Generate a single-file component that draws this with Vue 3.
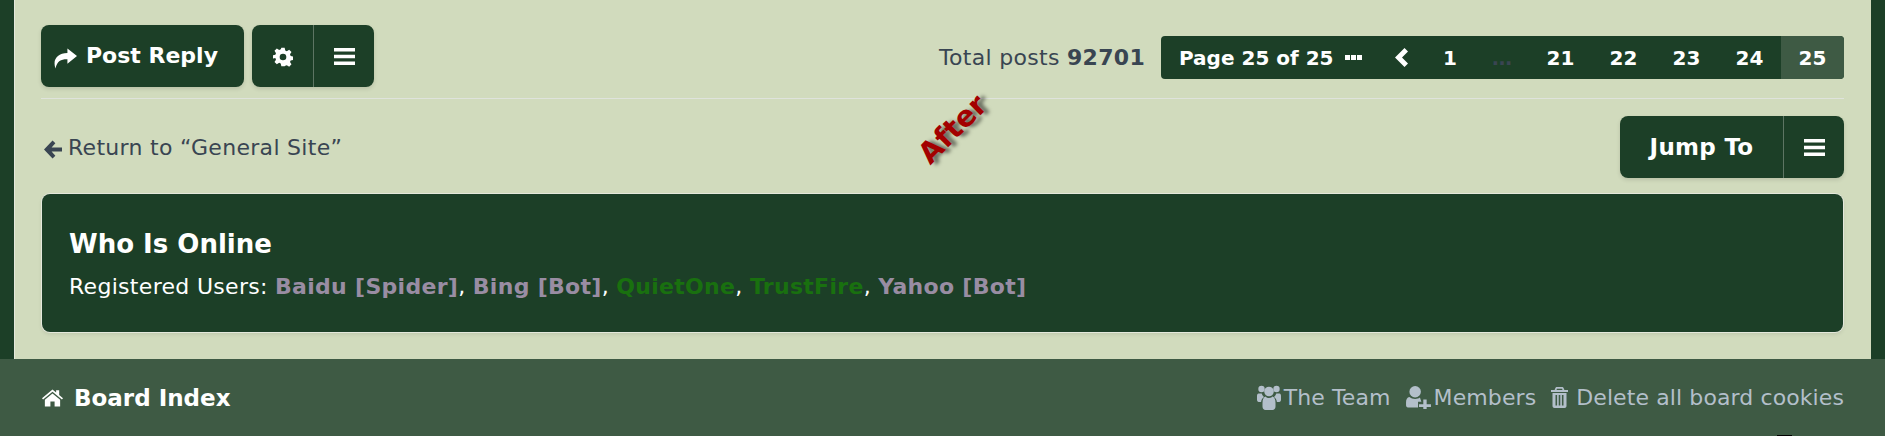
<template>
  <div class="page">
    <div class="wrap">
      <div class="content">
        <div class="action-bar">
          <a class="btn reply-btn">
            <svg class="ico reply" viewBox="0 0 24 21"><path d="M14 0l10 8-10 8v-4.800C8 11 3.200 12.500 1.600 21 -1.800 11.500 3.500 5 14 4.800z" /></svg>
            Post Reply
          </a>
          <div class="btn-group">
            <a class="btn seg">
              <svg class="ico gear" viewBox="0 0 24 24"><path fill-rule="evenodd" d="M10 1h4l.7 3.200 1.900.8 2.800-1.800 2.800 2.800-1.800 2.800.8 1.900 3.200.7v4l-3.200.7-.8 1.900 1.800 2.800-2.800 2.800-2.800-1.800-1.900.8L14 23h-4l-.7-3.200-1.900-.8-2.800 1.800-2.800-2.800 1.800-2.800-.8-1.900L-.4 14v-4l3.200-.7.8-1.900L1.800 4.600l2.800-2.800 2.800 1.800 1.900-.8zM12 8a4 4 0 1 0 0 8 4 4 0 0 0 0-8z" /></svg>
            </a>
            <a class="btn seg">
              <svg class="ico bars" viewBox="0 0 21 17"><path d="M0 0h21v3.400H0zM0 6.800h21v3.400H0zM0 13.600h21V17H0z" /></svg>
            </a>
          </div>
          <div class="pagination-wrap">
            <span class="total">Total posts <b>92701</b></span>
            <ul class="pagination">
              <li class="page-label">Page 25 of 25
                <svg class="ico dots" viewBox="0 0 17 5"><path d="M0 0h5v5H0zM6 0h5v5H6zM12 0h5v5h-5z" /></svg>
              </li>
              <li class="arrow"><svg class="ico chev" viewBox="0 0 13 19"><path d="M9.500 0L13 3.500 7 9.500l6 6L9.500 19 0 9.500z" /></svg></li>
              <li class="first">1</li>
              <li class="gap">…</li>
              <li v-for="p in pages" :key="p.label" :class="{ active: p.active }">{{ p.label }}</li>
            </ul>
          </div>
        </div>

        <div class="jump-row">
          <a class="back">
            <svg class="ico back-ico" viewBox="0 0 19 19"><path d="M9 0l3 3-4 4.500h11v4.200H8l4 4.300-3 3-9-9.500z" /></svg>
            Return to “General Site”
          </a>
          <div class="btn-group jump">
            <a class="btn seg jump-label">Jump To</a>
            <a class="btn seg">
              <svg class="ico bars" viewBox="0 0 21 17"><path d="M0 0h21v3.400H0zM0 6.800h21v3.400H0zM0 13.600h21V17H0z" /></svg>
            </a>
          </div>
        </div>

        <div class="after">After</div>

        <div class="online">
          <h3>Who Is Online</h3>
          <p>Registered Users:
            <template v-for="(u, i) in users" :key="u.name">
              <b :class="u.kind">{{ u.name }}</b><span v-if="i < users.length - 1">, </span>
            </template>
          </p>
        </div>
      </div>
    </div>

    <div class="footer">
      <a class="home">
        <svg class="ico home-ico" viewBox="0 0 22 18"><path d="M11 0l3.800 3.200V1H18v4.900L22 9.300l-1.100 1.300L11 2.400 1.100 10.600 0 9.300zM11 4.200l8 6.600V18h-5.800v-5.300H8.800V18H3v-7.200z" /></svg>
        Board Index
      </a>
      <div class="links">
        <a><svg class="ico team" viewBox="0 0 24 25"><circle cx="4.500" cy="4" r="3.200" /><circle cx="19.500" cy="4" r="3.200" /><circle cx="12" cy="6.500" r="4.800" /><path d="M1.500 8.500h3.200c.5 1.500 1.300 2.800 2.300 3.500-1.600 1-2.700 2.800-2.900 5H1.800C.6 17 0 16 0 14.800V11c0-1.500.6-2.500 1.500-2.500zM22.500 8.500h-3.200c-.5 1.500-1.300 2.800-2.300 3.500 1.600 1 2.700 2.800 2.900 5h2.300c1.200 0 1.800-1 1.800-2.200V11c0-1.500-.6-2.500-1.500-2.500zM8.500 11.500c1 1 2.200 1.500 3.500 1.500s2.500-.5 3.500-1.500c2 .8 3 3 3 6.500v3.500c0 2-1.300 3.500-3 3.500h-7c-1.700 0-3-1.500-3-3.500V18c0-3.500 1-5.700 3-6.500z" /></svg>The Team</a>
        <a><svg class="ico plus" viewBox="0 0 26 24"><circle cx="9.500" cy="6" r="6" /><path d="M3.500 11.500c1.500 1.300 3.800 2 6 2s3.500-.4 5-1.500l1.500 4.500h-3.500v6H2c-1.300 0-2-1-2-2.300v-3.200c0-3 1.200-5 3.500-5.500zM18 14h3.500v5H26v3h-4.500v2H18v-2h-4.500v-3H18z" /></svg>Members</a>
        <a><svg class="ico trash" viewBox="0 0 17 21"><path fill-rule="evenodd" d="M6 0h5c.8 0 1.400.5 1.700 1.200l.7 1.800H17v2H0V3h3.600l.7-1.800C4.600.5 5.200 0 6 0zm0 1.800L5.500 3h6L11 1.800zM1.500 6h14v13c0 1.200-.8 2-2 2h-10c-1.200 0-2-.8-2-2zM4.500 8v10.500h1.600V8zM7.700 8v10.500h1.600V8zM10.900 8v10.500h1.600V8z" /></svg>Delete all board cookies</a>
      </div>
    </div>
    <span class="sliver"></span>
  </div>
</template>

<script setup>
const pages = [
  { label: '21' },
  { label: '22' },
  { label: '23' },
  { label: '24' },
  { label: '25', active: true },
]

const users = [
  { name: 'Baidu [Spider]', kind: 'bot' },
  { name: 'Bing [Bot]', kind: 'bot' },
  { name: 'QuietOne', kind: 'member' },
  { name: 'TrustFire', kind: 'member' },
  { name: 'Yahoo [Bot]', kind: 'bot' },
]
</script>

<style>
html, body { margin: 0; background: #1c3f27; }
</style>

<style scoped>
.page { position: relative; width: 1885px; height: 436px; overflow: hidden; font-family: "DejaVu Sans", Verdana, sans-serif; font-size: 22px; letter-spacing: .3px; color: #394552; background: #1c3f27; }
.wrap { height: 359px; padding: 0 14px; box-sizing: border-box; }
.content { position: relative; height: 359px; box-sizing: border-box; padding: 25px 27px 0 26px; background: #d1dbbd; border-left: 1px solid #e4e8dc; }
.ico { fill: currentColor; display: block; flex: none; }

.action-bar { display: flex; align-items: flex-start; gap: 8px; height: 73px; border-bottom: 1px solid #dfe3dc; }
.btn { display: flex; align-items: center; justify-content: center; color: #fff; background: #1c3f27; font-weight: 700; height: 62px; box-sizing: border-box; }
.reply-btn { width: 203px; border-radius: 8px; gap: 9px; justify-content: flex-start; padding: 0 0 2px 13px; font-size: 22px; letter-spacing: 0; box-shadow: 0 2px 4px rgba(0, 0, 0, .12); }
.reply { width: 23px; height: 21px; margin-top: 6px; }
.btn-group { display: flex; border-radius: 8px; overflow: hidden; box-shadow: 0 2px 4px rgba(0, 0, 0, .12); }
.seg { width: 61px; }
.seg + .seg { border-left: 1px solid #5d7563; }
.gear { width: 20px; height: 20px; margin-top: 1px; }
.bars { width: 21px; height: 17px; }

.pagination-wrap { margin-left: auto; display: flex; align-items: center; gap: 16px; height: 43px; margin-top: 11px; }
.pagination { display: flex; margin: 0; padding: 0; list-style: none; height: 43px; background: #1c3f27; border-radius: 4px; overflow: hidden; color: #fff; font-weight: 700; font-size: 20px; letter-spacing: 0; }
.pagination li { display: flex; align-items: center; justify-content: center; width: 63px; }
.pagination .page-label { width: 216px; gap: 11px; justify-content: flex-start; box-sizing: border-box; padding-left: 18px; }
.pagination .arrow { width: 48px; }
.pagination .first { width: 50px; }
.pagination .gap { width: 54px; color: #394552; }
.pagination .active { background: #3e5a44; }
.dots { width: 17px; height: 5px; }
.chev { width: 13px; height: 19px; }

.jump-row { display: flex; align-items: flex-start; justify-content: space-between; margin-top: 17px; height: 62px; }
.back { display: flex; align-items: center; gap: 6px; height: 62px; margin-left: 3px; }
.back-ico { width: 18px; height: 19px; margin-top: 4px; }
.jump .jump-label { width: 163px; font-size: 23px; }

.after { position: absolute; left: 896px; top: 112px; font-weight: 700; font-size: 29px; letter-spacing: 0; color: #a30000; transform: rotate(-45deg); text-shadow: 4px 4px 4px rgba(0, 0, 0, .5); }

.online { margin: 16px 1px 0; height: 138px; box-sizing: border-box; padding: 35px 27px; background: #1c3f27; border-radius: 8px; color: #fff; box-shadow: 0 0 0 1px #e4e8dc, 0 2px 4px rgba(0, 0, 0, .1); }
.online h3 { margin: 0 0 15px; font-size: 26px; line-height: 30px; font-weight: 700; letter-spacing: 0; }
.online p { margin: 0; font-size: 22px; line-height: 26px; white-space: pre-wrap; }
.online .bot { color: #998da3; }
.online .member { color: #19700f; }

.footer { display: flex; align-items: center; justify-content: space-between; height: 77px; box-sizing: border-box; padding: 0 41px 0 42px; background: #3e5a44; }
.home { display: flex; align-items: center; gap: 11px; color: #fff; font-weight: 700; font-size: 23px; letter-spacing: 0; }
.home-ico { width: 21px; height: 18px; }
.links { display: flex; align-items: center; gap: 15px; color: #b3bfca; letter-spacing: .1px; }
.links a { display: flex; align-items: center; gap: 3px; }
.team { width: 24px; height: 25px; }
.plus { width: 25px; height: 23px; }
.trash { width: 17px; height: 21px; margin-right: 5px; }
.sliver { position: absolute; left: 1777px; bottom: 0; width: 15px; height: 1px; background: #000; }
</style>
